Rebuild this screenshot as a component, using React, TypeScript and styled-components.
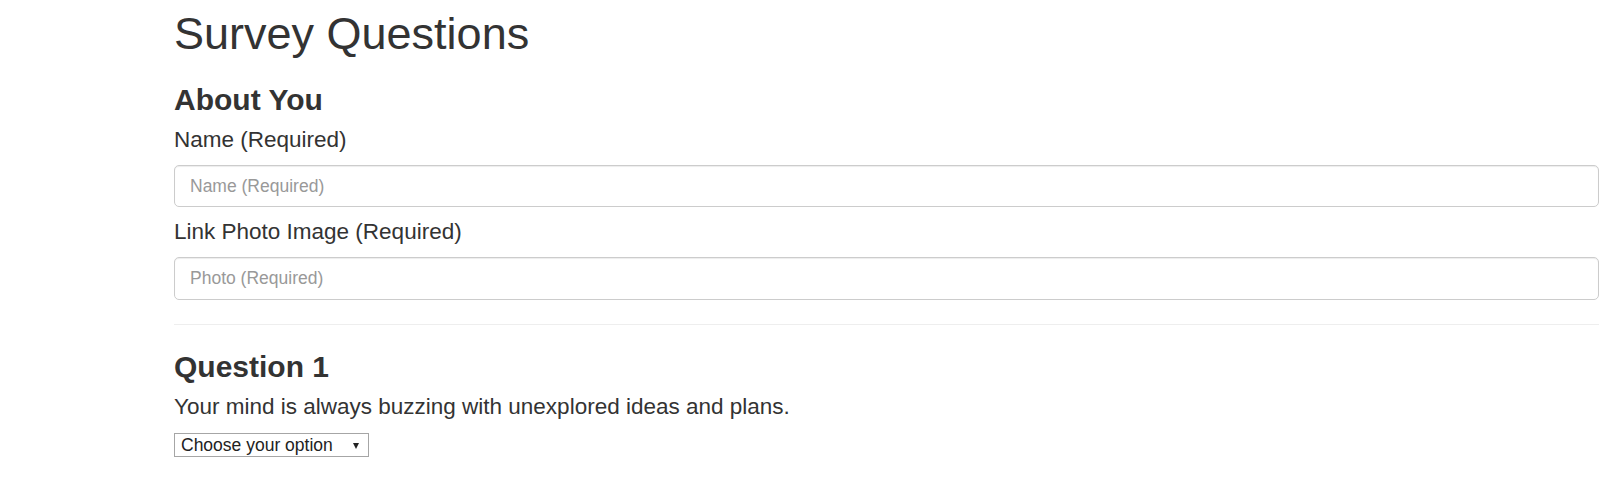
import React from "react";
import styled, { createGlobalStyle } from "styled-components";

const GlobalStyle = createGlobalStyle`
  html, body {
    margin: 0;
    padding: 0;
    background: #ffffff;
  }
  body {
    font-family: "Liberation Sans", Arial, Helvetica, sans-serif;
    color: #333333;
    font-size: 17.5px;
    line-height: 1.42857;
  }
  * { box-sizing: border-box; }
`;

const Page = styled.div`
  padding: 8.5px 24px 0 174px;
`;

const Title = styled.h1`
  margin: 0;
  font-size: 45px;
  line-height: 1.1;
  font-weight: 400;
  color: #333333;
`;

const SectionHeading = styled.h3<{ $top: number }>`
  margin: ${(p) => p.$top}px 0 8px;
  font-size: 30px;
  line-height: 1.1;
  font-weight: 700;
  color: #333333;
`;

const Field = styled.div`
  display: flex;
  flex-direction: column;
  margin-bottom: 8.8px;
`;

const FieldLabel = styled.label`
  display: block;
  font-size: 22.5px;
  line-height: 32.14px;
  font-weight: 400;
  margin-bottom: 8.8px;
  color: #333333;
`;

const TextInput = styled.input`
  display: block;
  width: 100%;
  height: 42.5px;
  padding: 7.5px 15px;
  font-family: "Liberation Sans", Arial, Helvetica, sans-serif;
  font-size: 17.5px;
  line-height: 1.42857;
  color: #555555;
  background: #ffffff;
  border: 1px solid #cccccc;
  border-radius: 5px;
  box-shadow: inset 0 1px 1px rgba(0, 0, 0, 0.075);
  outline: none;
  &::placeholder {
    color: #999999;
    opacity: 1;
  }
`;

const Divider = styled.hr`
  margin: 24.5px 0 0;
  border: 0;
  border-top: 1px solid #eeeeee;
  height: 0;
`;

const QuestionText = styled.p`
  margin: 7px 0 9.7px;
  font-size: 22.5px;
  line-height: 32.14px;
  color: #333333;
`;

const SelectWrap = styled.div`
  position: relative;
  width: 195px;
  height: 24px;
  &::after {
    content: "";
    position: absolute;
    right: 10px;
    top: 10px;
    border-left: 3.5px solid transparent;
    border-right: 3.5px solid transparent;
    border-top: 6px solid #222222;
    pointer-events: none;
  }
`;

const Select = styled.select`
  display: block;
  width: 100%;
  height: 24px;
  margin: 0;
  padding: 0 20px 0 6px;
  font-family: "Liberation Sans", Arial, Helvetica, sans-serif;
  font-size: 17.5px;
  line-height: 22px;
  color: #222222;
  background: #ffffff;
  border: 1px solid #a6a6a6;
  border-radius: 0;
  appearance: none;
  -webkit-appearance: none;
  outline: none;
`;

export default function App() {
  return (
    <>
      <GlobalStyle />
      <Page>
        <Title>Survey Questions</Title>
        <SectionHeading $top={25}>About You</SectionHeading>
        <Field>
          <FieldLabel htmlFor="name">Name (Required)</FieldLabel>
          <TextInput id="name" type="text" placeholder="Name (Required)" />
        </Field>
        <Field>
          <FieldLabel htmlFor="photo">Link Photo Image (Required)</FieldLabel>
          <TextInput id="photo" type="text" placeholder="Photo (Required)" />
        </Field>
        <Divider />
        <SectionHeading $top={25}>Question 1</SectionHeading>
        <QuestionText>Your mind is always buzzing with unexplored ideas and plans.</QuestionText>
        <SelectWrap>
          <Select defaultValue="">
            <option value="">Choose your option</option>
            <option value="1">1 (Strongly Disagree)</option>
            <option value="2">2</option>
            <option value="3">3</option>
            <option value="4">4</option>
            <option value="5">5 (Strongly Agree)</option>
          </Select>
        </SelectWrap>
      </Page>
    </>
  );
}
